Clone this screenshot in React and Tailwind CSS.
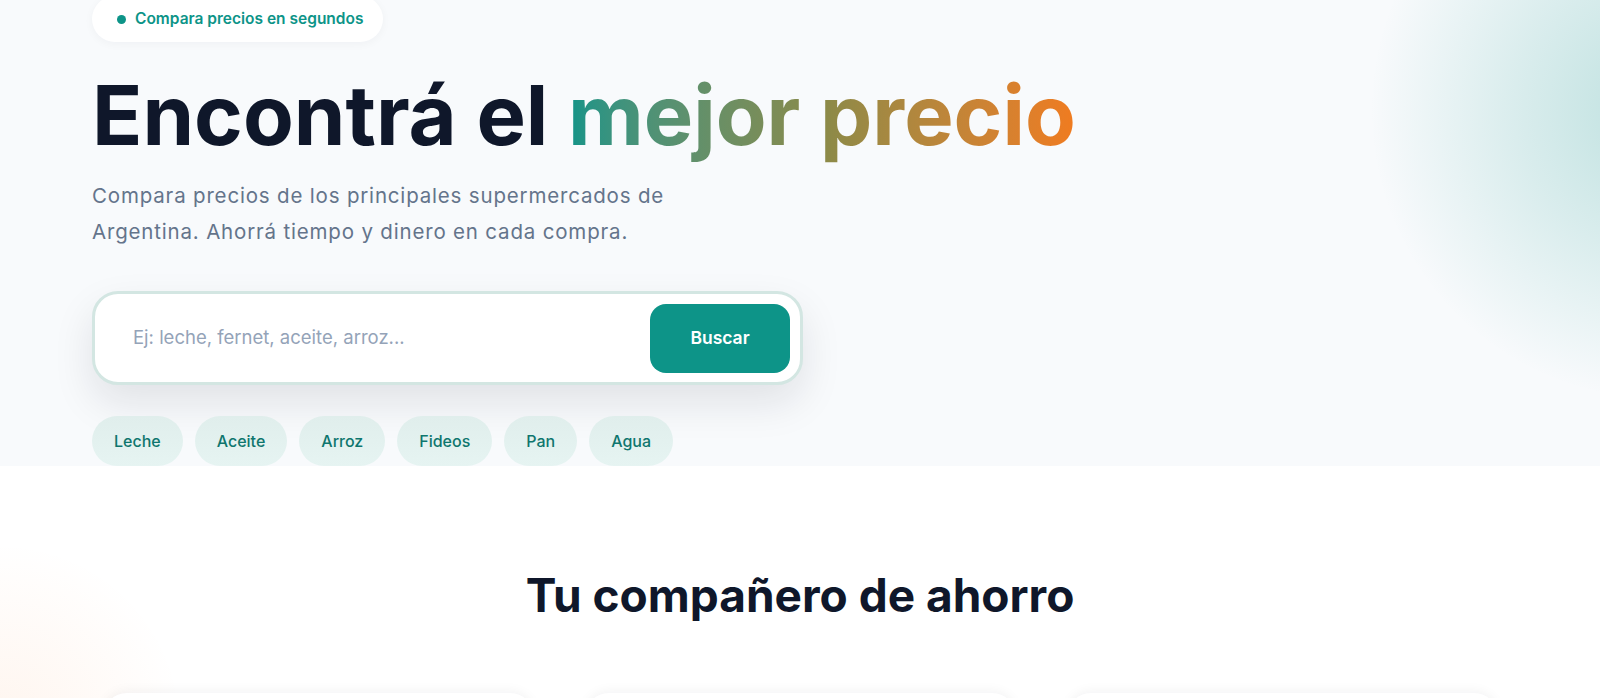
import React from 'react';

const chips = ['Leche', 'Aceite', 'Arroz', 'Fideos', 'Pan', 'Agua'];

export default function App() {
    return (
        <div className="relative min-h-screen overflow-hidden bg-white" style={{ fontFamily: 'Inter, "Noto Sans", sans-serif' }}>
            {/* Hero */}
            <section className="relative overflow-hidden bg-[#f8fafc]">
                {/* blob derecha */}
                <div className="pointer-events-none absolute -right-[350px] -top-[180px] h-[580px] w-[580px] rounded-full bg-[radial-gradient(circle_closest-side,rgba(13,148,136,0.25)_0%,rgba(13,148,136,0.13)_50%,rgba(13,148,136,0)_100%)]" />

                <div className="relative px-[92px]">
                    <div className="-mt-[4px] inline-flex h-[46px] items-center gap-[9px] rounded-full bg-white pl-[25px] pr-[20px] shadow-[0_2px_10px_rgba(15,23,42,0.04)]">
                        <span className="h-[9px] w-[9px] rounded-full bg-[#0d9488]" />
                        <span className="text-[15.5px] font-semibold text-[#0d9488]">Compara precios en segundos</span>
                    </div>

                    <h1 className="mt-[28px] text-[83px] font-bold leading-[1.1] tracking-normal text-[#0f172a]">
                        Encontrá el{' '}
                        <span className="bg-gradient-to-r from-[#0d9488] via-[#8a8a48] to-[#f07b1f] bg-clip-text text-transparent">
                            mejor precio
                        </span>
                    </h1>

                    <p className="mt-[17px] text-[20.5px] leading-[36px] tracking-[0.04em] text-[#64748b]">
                        Compara precios de los principales supermercados de
                        <br />
                        Argentina. Ahorrá tiempo y dinero en cada compra.
                    </p>

                    {/* Buscador */}
                    <div className="mt-[41px] flex h-[94px] w-[711px] items-center rounded-[26px] border-[3px] border-[#d3e6e2] bg-white pl-[38px] pr-[10px] shadow-[0_18px_40px_rgba(15,23,42,0.10)]">
                        <input
                            type="text"
                            placeholder="Ej: leche, fernet, aceite, arroz..."
                            className="flex-1 bg-transparent text-[18.5px] text-[#0f172a] placeholder-[#94a3b8] outline-none"
                        />
                        <button className="h-[69px] w-[140px] rounded-[16px] bg-[#0d9488] text-[17.5px] font-semibold text-white">
                            Buscar
                        </button>
                    </div>

                    {/* Sugerencias */}
                    <div className="mt-[31px] flex gap-[12px]">
                        {chips.map((c) => (
                            <button
                                key={c}
                                className="h-[50px] rounded-full bg-gradient-to-b from-[#e0eeec] to-[#e6f4f2] px-[22px] text-[16px] font-medium text-[#0f766e]"
                            >
                                {c}
                            </button>
                        ))}
                    </div>
                </div>
            </section>

            {/* Sección compañero */}
            <section className="relative bg-white">
                <div className="pointer-events-none absolute -left-[200px] top-[60px] h-[400px] w-[400px] rounded-full bg-[radial-gradient(circle,rgba(249,115,22,0.07)_0%,rgba(249,115,22,0)_65%)]" />
                <h2 className="relative pt-[95px] text-center text-[46px] font-bold tracking-normal text-[#0f172a]">
                    Tu compañero de ahorro
                </h2>
                <div className="relative mx-auto mt-[63px] grid w-[1395px] grid-cols-3 gap-[51px]">
                    {[0, 1, 2].map((i) => (
                        <div key={i} className="h-[200px] rounded-[24px] bg-white shadow-[0_-2px_12px_rgba(15,23,42,0.05)]" />
                    ))}
                </div>
            </section>
        </div>
    );
}
